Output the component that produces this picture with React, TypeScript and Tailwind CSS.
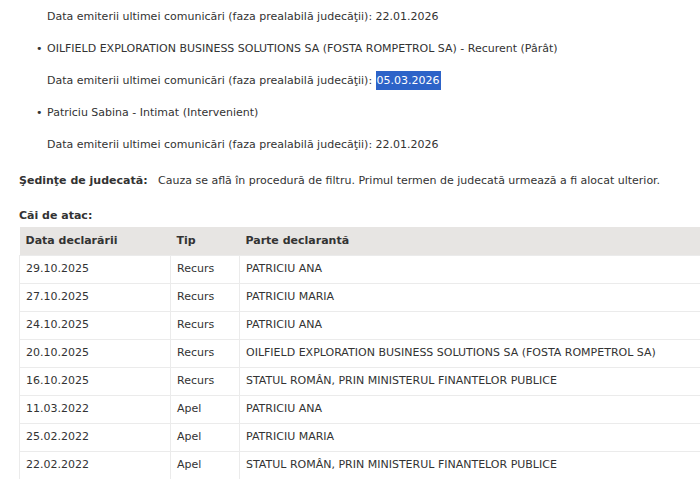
const ROWS = [
  { date: '29.10.2025', tip: 'Recurs', parte: 'PATRICIU ANA' },
  { date: '27.10.2025', tip: 'Recurs', parte: 'PATRICIU MARIA' },
  { date: '24.10.2025', tip: 'Recurs', parte: 'PATRICIU ANA' },
  { date: '20.10.2025', tip: 'Recurs', parte: 'OILFIELD EXPLORATION BUSINESS SOLUTIONS SA (FOSTA ROMPETROL SA)' },
  { date: '16.10.2025', tip: 'Recurs', parte: 'STATUL ROMÂN, PRIN MINISTERUL FINANTELOR PUBLICE' },
  { date: '11.03.2022', tip: 'Apel', parte: 'PATRICIU ANA' },
  { date: '25.02.2022', tip: 'Apel', parte: 'PATRICIU MARIA' },
  { date: '22.02.2022', tip: 'Apel', parte: 'STATUL ROMÂN, PRIN MINISTERUL FINANTELOR PUBLICE' },
]

const LABEL = 'Data emiterii ultimei comunicări (faza prealabilă judecăţii):'

export default function App() {
  return (
    <div className="w-[700px] h-[479px] overflow-hidden bg-white text-[#333] text-[11px] font-['DejaVu_Sans',Verdana,sans-serif]">
      <div className="pt-[1px] pl-[47px]">
        <div className="h-[32px] leading-[32px]">{LABEL} 22.01.2026</div>
        <div className="h-[32px] leading-[32px] relative">
          <span className="absolute left-[-11px] top-0">•</span>
          OILFIELD EXPLORATION BUSINESS SOLUTIONS SA (FOSTA ROMPETROL SA) - Recurent (Pârât)
        </div>
        <div className="h-[32px] leading-[32px]">
          {LABEL} <span className="bg-[#2d63c8] text-white px-[1px] py-[3px]">05.03.2026</span>
        </div>
        <div className="h-[32px] leading-[32px] relative">
          <span className="absolute left-[-11px] top-0">•</span>
          Patriciu Sabina - Intimat (Intervenient)
        </div>
        <div className="h-[32px] leading-[32px]">{LABEL} 22.01.2026</div>
      </div>

      <div className="flex pl-[19px] mt-[4px] h-[32px] leading-[32px] whitespace-nowrap">
        <span className="font-bold w-[139px] shrink-0">Şedinţe de judecată:</span>
        <span>Cauza se află în procedură de filtru. Primul termen de judecată urmează a fi alocat ulterior.</span>
      </div>

      <div className="pl-[19px] mt-[11px] font-bold leading-[16px]">Căi de atac:</div>

      <table className="ml-[19px] mt-[3px] w-[700px] border-collapse">
        <thead>
          <tr className="bg-[#e7e5e3] h-[28px]">
            <th className="w-[151px] text-left font-bold px-[6px] whitespace-nowrap">Data declarării</th>
            <th className="w-[69px] text-left font-bold px-[6px] whitespace-nowrap">Tip</th>
            <th className="text-left font-bold px-[6px] whitespace-nowrap">Parte declarantă</th>
          </tr>
        </thead>
        <tbody>
          {ROWS.map((r) => (
            <tr key={r.date + r.parte} className="h-[28px]">
              <td className="px-[6px] border border-[#ebebeb] whitespace-nowrap">{r.date}</td>
              <td className="px-[6px] border border-[#ebebeb] whitespace-nowrap">{r.tip}</td>
              <td className="px-[6px] border border-[#ebebeb] whitespace-nowrap">{r.parte}</td>
            </tr>
          ))}
        </tbody>
      </table>
    </div>
  )
}
